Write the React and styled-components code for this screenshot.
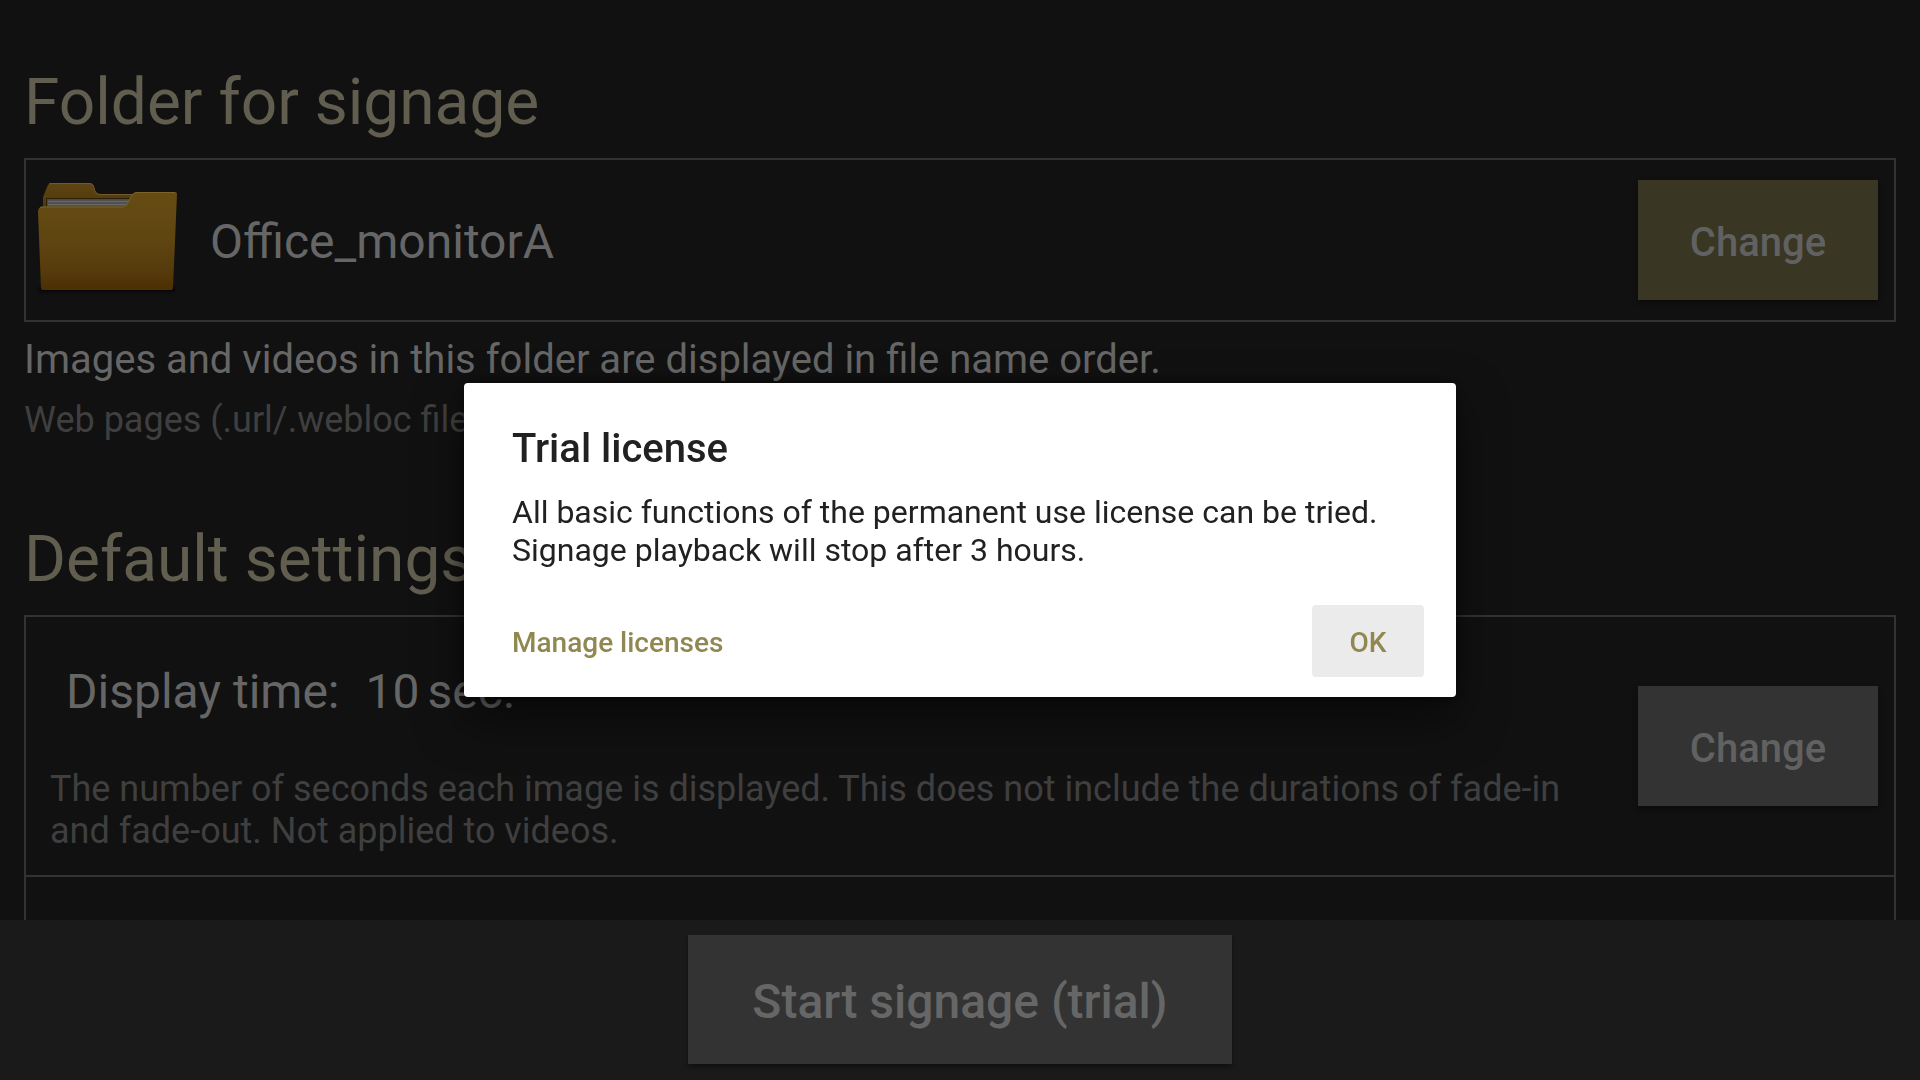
import React, { useState } from 'react'
import styled, { createGlobalStyle } from 'styled-components'

const GlobalStyle = createGlobalStyle`
  * {
    box-sizing: border-box;
  }

  body {
    margin: 0;
    background: #111;
    color: #666;
    font-family: Roboto, "Liberation Sans", sans-serif;
  }
`;

const Screen = styled.div`
  display: flex;
  flex-direction: column;
  height: 100vh;
`;

const Settings = styled.main`
  flex: 1;
  min-height: 0;
  overflow: hidden;
  padding: 65px 24px 0;
`;

const Heading = styled.h1`
  margin: ${props => props.$spaced ? '81px' : '0'} 0 17px;
  color: #615e50;
  font-size: 64px;
  font-weight: 400;
  line-height: 76px;
`;

const Panel = styled.section`
  border: 2px solid #333;
`;

const FolderRow = styled.div`
  display: flex;
  align-items: center;
  height: 160px;
  padding: 0 16px 0 8px;
`;

const FolderArt = styled.svg`
  flex: none;
  width: 144px;
  height: 144px;
`;

const FolderName = styled.div`
  flex: 1;
  margin-left: 32px;
  padding-top: 4px;
  font-size: 48px;
  line-height: 56px;
`;

const Note = styled.p`
  margin: 14px 0 0;
  font-size: 40px;
  line-height: 48px;
`;

const SubNote = styled.p`
  margin: 15px 0 0;
  color: #3f3f3f;
  font-size: 36px;
  line-height: 42px;
`;

const SettingRow = styled.div`
  display: flex;
  align-items: center;
  min-height: 260px;
  padding: 0 16px 0 24px;
  border-bottom: 2px solid #333;
`;

const SettingText = styled.div`
  flex: 1;
  padding: 24px 56px 0 0;
`;

const SettingValue = styled.div`
  display: flex;
  padding-left: 16px;
  font-size: 48px;
  line-height: 56px;
`;

const Amount = styled.span`
  margin-left: 26px;
`;

const Unit = styled.span`
  margin-left: 8px;
`;

const Description = styled.p`
  margin: 48px 0 0;
  color: #3f3f3f;
  font-size: 36px;
  line-height: 42px;
`;

const RaisedButton = styled.button`
  flex: none;
  min-width: 240px;
  height: ${props => props.$large ? '129px' : '120px'};
  padding: 4px ${props => props.$large ? '64px' : '48px'} 0;
  border: 0;
  background: ${props => props.$accent ? '#393623' : '#333'};
  color: ${props => props.$large ? '#666' : '#616161'};
  font-family: inherit;
  font-size: ${props => props.$large ? '48px' : '40px'};
  font-weight: 500;
  box-shadow: 0 3px 5px rgba(0, 0, 0, 0.4);
`;

const Footer = styled.footer`
  display: flex;
  justify-content: center;
  height: 160px;
  padding-top: 15px;
  background: #1a1a1a;
`;

const Overlay = styled.div`
  position: fixed;
  inset: 0;
  display: flex;
  align-items: center;
  justify-content: center;
`;

const Dialog = styled.div`
  width: 992px;
  max-width: 90vw;
  padding: 42px 32px 20px 48px;
  border-radius: 4px;
  background: #fff;
  color: #212121;
  box-shadow: 0 22px 48px rgba(0, 0, 0, 0.5), 0 0 12px rgba(0, 0, 0, 0.5);
`;

const DialogTitle = styled.h2`
  margin: 0;
  font-size: 40px;
  font-weight: 500;
  line-height: 48px;
`;

const DialogText = styled.p`
  margin: 20px 0 0;
  font-size: 32px;
  line-height: 38px;
`;

const DialogActions = styled.div`
  display: flex;
  align-items: center;
  justify-content: space-between;
  margin-top: 36px;
`;

const TextButton = styled.button`
  min-width: 112px;
  height: 72px;
  padding: 2px ${props => props.$filled ? '32px' : '0'} 0;
  border: 0;
  border-radius: 4px;
  background: ${props => props.$filled ? '#ebebeb' : 'transparent'};
  color: #908850;
  font-family: inherit;
  font-size: 28px;
  font-weight: 500;
`;

function FolderIcon() {
  return (
    <FolderArt viewBox="0 0 144 144" aria-hidden="true">
      <defs>
        <linearGradient id="front" x1="0" y1="0" x2="0" y2="1">
          <stop offset="0" stopColor="#664c12" />
          <stop offset="0.5" stopColor="#5e4511" />
          <stop offset="0.8" stopColor="#563b0c" />
          <stop offset="1" stopColor="#4c2f04" />
        </linearGradient>
        <linearGradient id="back" x1="0" y1="0" x2="0" y2="1">
          <stop offset="0" stopColor="#5e4512" />
          <stop offset="1" stopColor="#4e350a" />
        </linearGradient>
        <filter id="soft" x="-10%" y="-20%" width="120%" height="200%">
          <feGaussianBlur stdDeviation="1.5" />
        </filter>
      </defs>
      <path d="M5 119h136v5H5z" fill="#000" opacity="0.6" filter="url(#soft)" />
      <path d="M9 44V29l4-10q2-4 4-4h39q3 0 4 4 1 7 6 7h36v18z" fill="url(#back)" />
      <path d="M15 16q1-.5 2-.5h39q3 0 4 4 1 7 6 7h34" fill="none" stroke="#70592a" strokeWidth="1" />
      <path d="M12 30h84v10H12z" fill="#2e2007" />
      <path d="M13 31h84v8H13z" fill="#4a4a4a" />
      <path d="M14 33.500h82M14 36.500h80" stroke="#686868" strokeWidth="1.500" />
      <path d="M9 38.500h80q3 0 5-4l3-6q2-4.500 6-4.500h38q2 0 2 2l-4 94q0 2-2 2H9q-2 0-2-2L4 44q0-5.500 5-5.500z" fill="url(#front)" />
      <path d="M6 39.500q1-.5 3-.5h80q3 0 5-4l3-6q2-4.500 6-4.500h38" fill="none" stroke="#7a6229" strokeWidth="1" />
    </FolderArt>
  )
}

function App() {

  const [open, setOpen] = useState(true);

  return (
    <>
      <GlobalStyle />
      <Screen>
        <Settings>
          <Heading>Folder for signage</Heading>
          <Panel>
            <FolderRow>
              <FolderIcon />
              <FolderName>Office_monitorA</FolderName>
              <RaisedButton $accent>Change</RaisedButton>
            </FolderRow>
          </Panel>
          <Note>Images and videos in this folder are displayed in file name order.</Note>
          <SubNote>Web pages (.url/.webloc file)</SubNote>

          <Heading as="h2" $spaced>Default settings</Heading>
          <Panel>
            <SettingRow>
              <SettingText>
                <SettingValue>
                  Display time:
                  <Amount>10</Amount>
                  <Unit>sec.</Unit>
                </SettingValue>
                <Description>
                  The number of seconds each image is displayed. This does not include the
                  durations of fade-in and fade-out. Not applied to videos.
                </Description>
              </SettingText>
              <RaisedButton>Change</RaisedButton>
            </SettingRow>
            <SettingRow />
          </Panel>
        </Settings>
        <Footer>
          <RaisedButton $large>Start signage (trial)</RaisedButton>
        </Footer>
      </Screen>

      {open && (
        <Overlay>
          <Dialog role="dialog" aria-modal="true" aria-labelledby="dialog-title">
            <DialogTitle id="dialog-title">Trial license</DialogTitle>
            <DialogText>
              All basic functions of the permanent use license can be tried.<br />
              Signage playback will stop after 3 hours.
            </DialogText>
            <DialogActions>
              <TextButton>Manage licenses</TextButton>
              <TextButton $filled onClick={() => setOpen(false)}>OK</TextButton>
            </DialogActions>
          </Dialog>
        </Overlay>
      )}
    </>
  )
}

export default App
